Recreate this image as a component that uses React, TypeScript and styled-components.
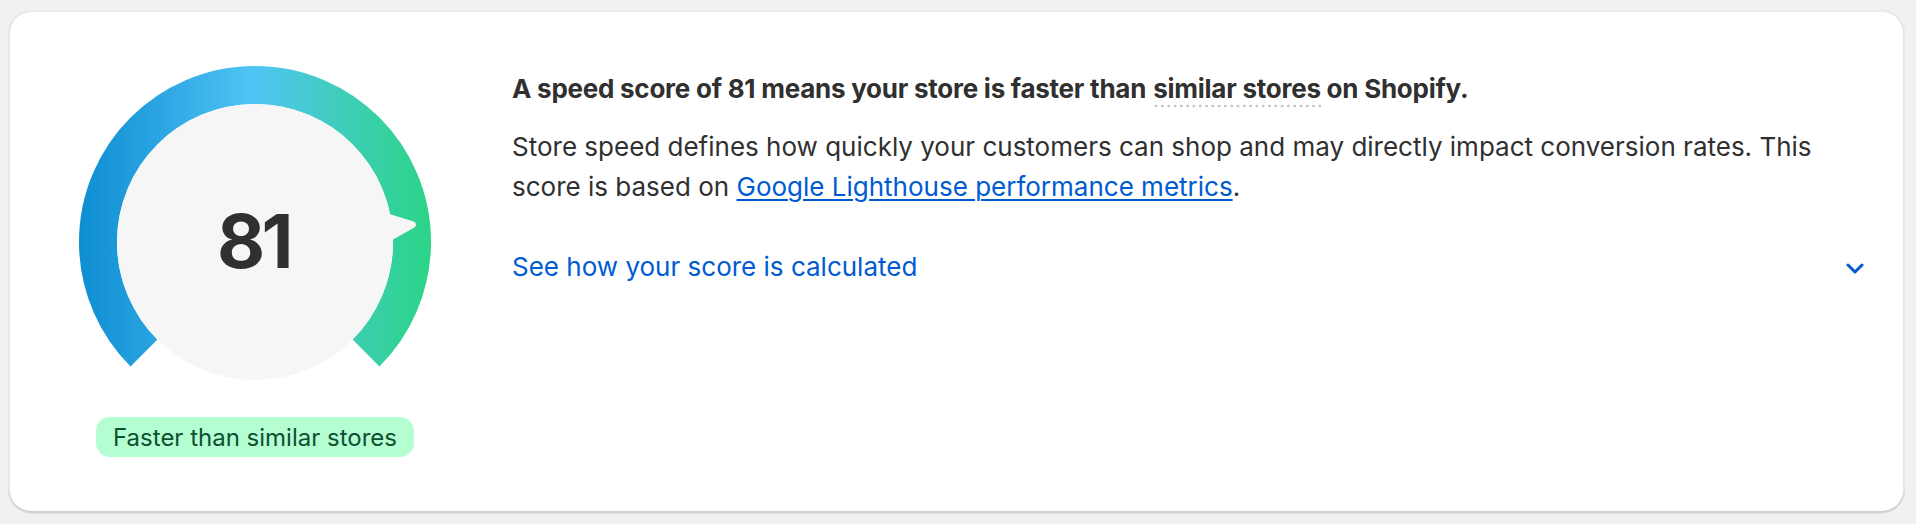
import React from "react";
import styled, { createGlobalStyle } from "styled-components";

const GlobalStyle = createGlobalStyle`
  html, body {
    margin: 0;
    padding: 0;
    background: #f1f1f1;
    font-family: Inter, "Noto Sans", "Liberation Sans", sans-serif;
    color: #303030;
    -webkit-font-smoothing: antialiased;
  }
  * { box-sizing: border-box; }
`;

const Page = styled.div`
  padding: 10px 11px 11px 8px;
`;

const Card = styled.section`
  display: flex;
  align-items: flex-start;
  gap: 81px;
  height: 503px;
  padding: 56px 41px 0 71px;
  background: #ffffff;
  border-radius: 24px;
  box-shadow: 0 1px 0 rgba(26, 26, 26, 0.07), inset 0 -2px 0 #d0d0d0,
    inset 2px 0 0 #e6e6e6, inset -2px 0 0 #e6e6e6, inset 0 2px 0 #ebebeb;
`;

const GaugeColumn = styled.div`
  display: flex;
  flex-direction: column;
  align-items: center;
  width: 352px;
  flex-shrink: 0;
`;

const GaugeWrap = styled.div`
  position: relative;
  width: 352px;
  height: 351px;
`;

const GaugeSvg = styled.svg`
  display: block;
  width: 352px;
  height: 352px;
`;

const Score = styled.div`
  position: absolute;
  inset: 0;
  display: flex;
  align-items: center;
  justify-content: center;
  font-size: 74px;
  font-weight: 700;
  letter-spacing: -3.5px;
  color: #303030;
  line-height: 1;
  padding: 0 3px 2px 0;
`;

const Badge = styled.span`
  display: inline-flex;
  align-items: center;
  height: 40px;
  padding: 0 17px;
  border-radius: 14px;
  background: #b4fed2;
  color: #0c5132;
  font-size: 24px;
  font-weight: 400;
`;

const TextColumn = styled.div`
  flex: 1;
  min-width: 0;
  display: flex;
  flex-direction: column;
  padding-top: 3px;
`;

const Heading = styled.h2`
  margin: 0;
  font-size: 26px;
  line-height: 40px;
  font-weight: 650;
  letter-spacing: -0.25px;
  color: #303030;
`;

const Dotted = styled.span`
  display: inline-block;
  margin-left: 7px;
  line-height: 39px;
  background-image: radial-gradient(circle, #c8c8c8 1.3px, transparent 1.7px);
  background-size: 6.3px 4px;
  background-repeat: repeat-x;
  background-position: 0 100%;
`;

const Body = styled.p`
  margin: 18px 0 0;
  font-size: 26px;
  line-height: 40px;
  font-weight: 400;
  color: #303030;
`;

const Link = styled.a`
  color: #005bd3;
  text-decoration: underline;
  text-underline-offset: 3px;
  text-decoration-thickness: 2px;
`;

const DisclosureRow = styled.div`
  display: flex;
  align-items: center;
  justify-content: space-between;
  margin-top: 40px;
  height: 40px;
`;

const DisclosureText = styled.span`
  font-size: 26px;
  line-height: 40px;
  color: #005bd3;
`;

const Chevron = styled.svg`
  display: block;
  width: 18px;
  height: 12px;
  margin-top: 4px;
`;

const CX = 176;
const CY = 176;

function polar(r: number, deg: number) {
  const a = (deg * Math.PI) / 180;
  return [CX + r * Math.cos(a), CY + r * Math.sin(a)];
}

function Gauge({ score }: { score: number }) {
  const r = 157;
  const [sx, sy] = polar(r, 135);
  const [ex, ey] = polar(r, 45);
  const angle = 135 + (270 * score) / 100;
  const inner = 138;
  return (
    <GaugeWrap>
      <GaugeSvg viewBox="0 0 352 352">
        <defs>
          <linearGradient id="gaugeGrad" x1="0" y1="0" x2="352" y2="0" gradientUnits="userSpaceOnUse">
            <stop offset="0" stopColor="#0e8ed1" />
            <stop offset="0.22" stopColor="#2aa4e2" />
            <stop offset="0.5" stopColor="#50c5f5" />
            <stop offset="0.75" stopColor="#3fcdb8" />
            <stop offset="1" stopColor="#2bd486" />
          </linearGradient>
        </defs>
        <path
          d={`M ${sx} ${sy} A ${r} ${r} 0 1 1 ${ex} ${ey}`}
          fill="none"
          stroke="url(#gaugeGrad)"
          strokeWidth={38}
        />
        <circle cx={CX} cy={CY} r={inner} fill="#f6f6f6" />
        <g transform={`rotate(${angle} ${CX} ${CY})`}>
          <path
            d={`M ${CX + inner - 6} ${CY - 15} L ${CX + 160} ${CY - 3} Q ${CX + 164} ${CY} ${CX + 160} ${CY + 3} L ${CX + inner - 6} ${CY + 15} Z`}
            fill="#f6f6f6"
          />
        </g>
      </GaugeSvg>
      <Score>{score}</Score>
    </GaugeWrap>
  );
}

export default function App() {
  return (
    <>
      <GlobalStyle />
      <Page>
        <Card>
          <GaugeColumn>
            <Gauge score={81} />
            <Badge>Faster than similar stores</Badge>
          </GaugeColumn>
          <TextColumn>
            <Heading>
              A speed score of 81 means your store is faster than
              <Dotted>similar stores</Dotted> on Shopify.
            </Heading>
            <Body>
              Store speed defines how quickly your customers can shop and may directly impact
              conversion rates. This score is based on{" "}
              <Link href="#">Google Lighthouse performance metrics</Link>.
            </Body>
            <DisclosureRow>
              <DisclosureText>See how your score is calculated</DisclosureText>
              <Chevron viewBox="0 0 18 12">
                <path d="M2 2 L9 9 L16 2" fill="none" stroke="#005bd3" strokeWidth="3" strokeLinecap="round" strokeLinejoin="round" />
              </Chevron>
            </DisclosureRow>
          </TextColumn>
        </Card>
      </Page>
    </>
  );
}
